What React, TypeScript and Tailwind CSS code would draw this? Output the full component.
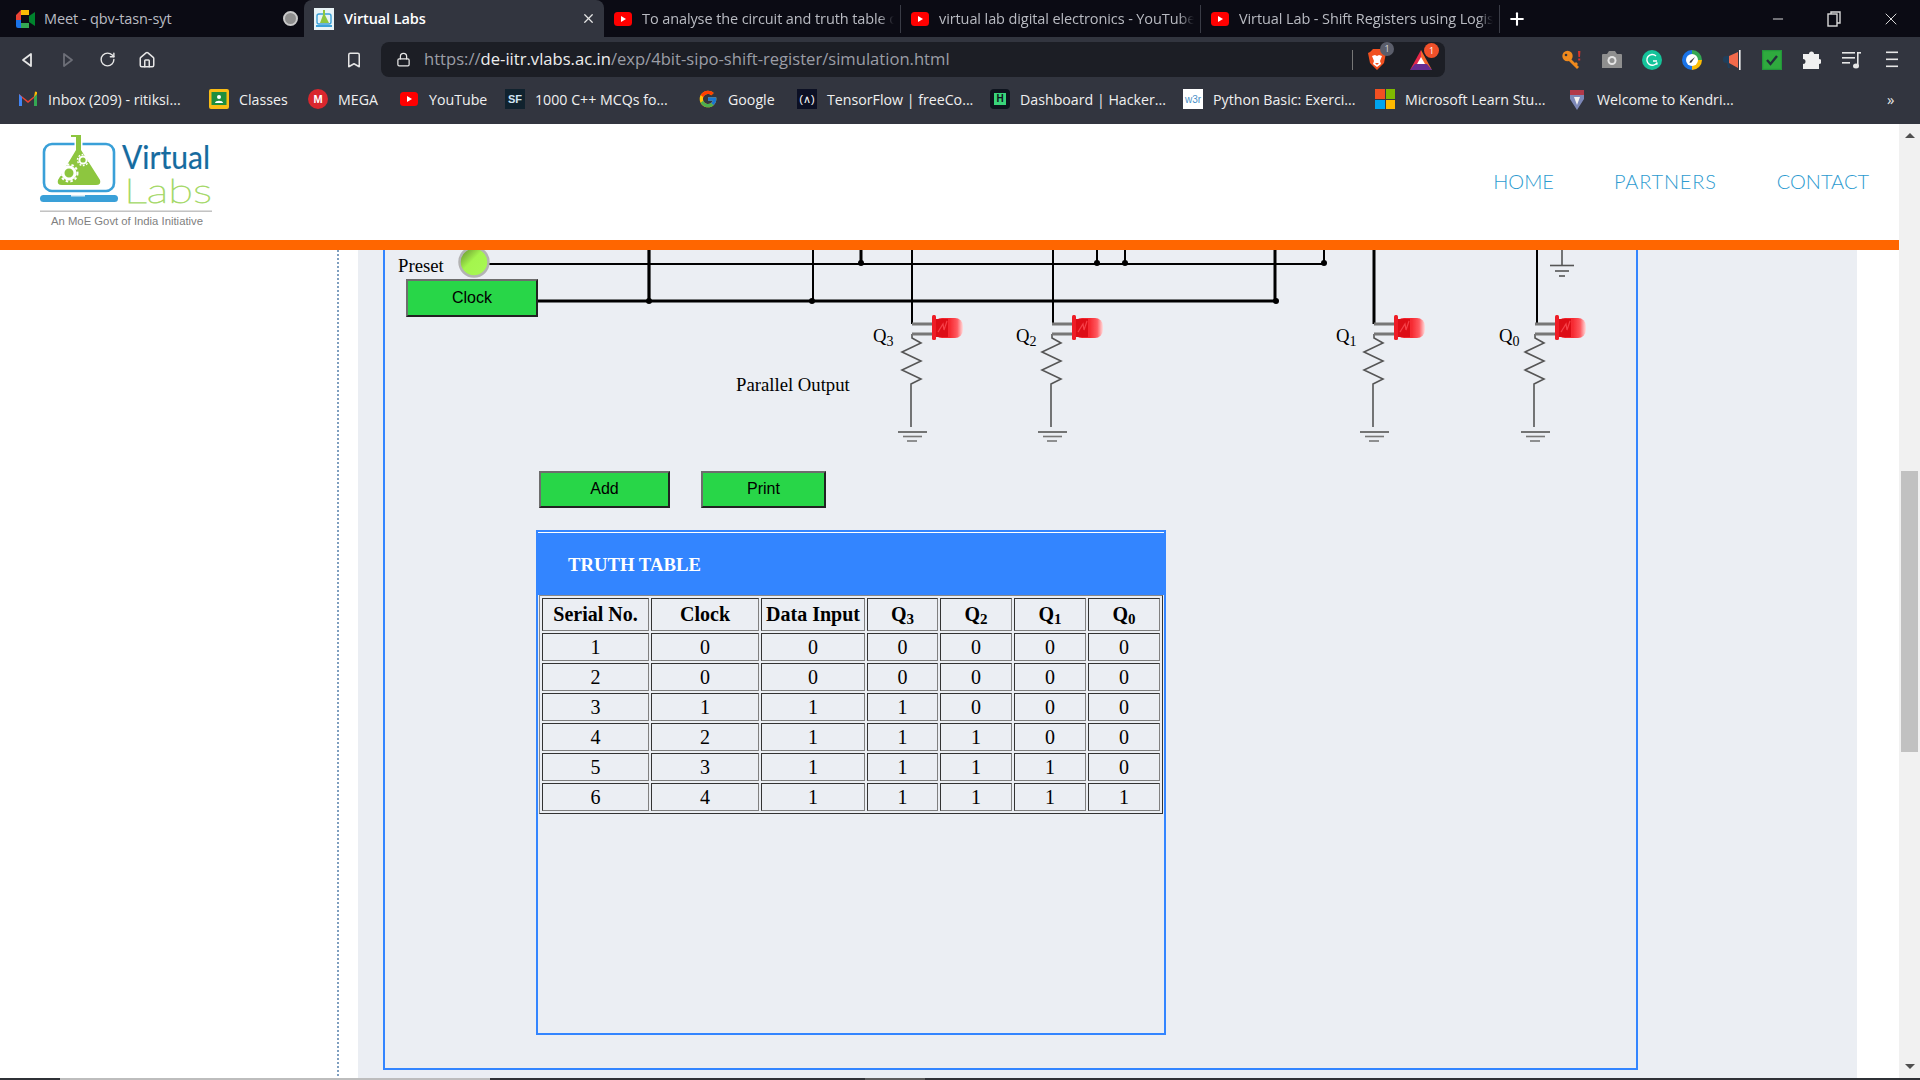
import { FcGoogle } from 'react-icons/fc';
import { Bookmark, Home, Lock, Minus, Plus, RotateCw, X } from 'lucide-react';
import type { ReactNode } from 'react';

const ui = "font-['Open_Sans',sans-serif]";

function YouTubeIcon() {
  return (
    <svg width="18" height="18" viewBox="0 0 18 18" className="shrink-0">
      <rect x="0" y="2" width="18" height="14" rx="3.5" fill="#f00" />
      <path d="M7 6l5 3-5 3z" fill="#fff" />
    </svg>
  );
}

function MeetIcon() {
  return (
    <svg width="20" height="18" viewBox="0 0 20 18" className="shrink-0">
      <path d="M1 5l5-5h8v5H6v5H1z" fill="#ea4335" />
      <path d="M1 10h5v8H3a2 2 0 0 1-2-2z" fill="#1a73e8" />
      <path d="M6 13h8v5H6z" fill="#34a853" />
      <path d="M6 5h8v8H6z" fill="#0b0b14" />
      <path d="M6 0h8v5H6z" fill="#fbbc04" />
      <path d="M14 6l6-4v14l-6-4z" fill="#00832d" />
    </svg>
  );
}

function VlabsFavicon() {
  return (
    <svg width="20" height="22" viewBox="0 0 20 22" className="shrink-0">
      <rect width="20" height="22" fill="#e8f3f6" />
      <rect x="3" y="6" width="14" height="10" rx="2" fill="none" stroke="#3aa0d8" strokeWidth="1.4" />
      <path d="M9 2h2v5l4 8H6l3-8z" fill="#8dc63f" />
      <rect x="2" y="17" width="16" height="2" fill="#3aa0d8" />
    </svg>
  );
}

function GmailIcon() {
  return (
    <svg width="20" height="16" viewBox="0 0 20 16">
      <path d="M1 15V3l9 7 9-7v12h-3V7l-6 5-6-5v8z" fill="#ea4335" />
      <path d="M1 15h3V6L1 3z" fill="#4285f4" />
      <path d="M19 15h-3V6l3-3z" fill="#34a853" />
      <path d="M16 6l3-3V1l-2-.5z" fill="#fbbc04" />
    </svg>
  );
}

function ClassroomIcon() {
  return (
    <svg width="20" height="20" viewBox="0 0 20 20">
      <rect width="20" height="20" rx="2" fill="#f9bc15" />
      <rect x="2.5" y="3" width="15" height="13" fill="#1e8e3e" />
      <circle cx="10" cy="8" r="2" fill="#fff" />
      <path d="M6 14c0-3 8-3 8 0z" fill="#fff" />
    </svg>
  );
}

function MegaIcon() {
  return (
    <div className="w-5 h-5 rounded-full bg-[#d9272e] text-white text-[11px] font-bold flex items-center justify-center font-['Liberation_Sans',sans-serif]">
      M
    </div>
  );
}

function SfIcon() {
  return (
    <div className="w-5 h-5 bg-[#10222e] text-[#cfe4f2] text-[11px] font-bold flex items-center justify-center font-['Liberation_Sans',sans-serif]">
      SF
    </div>
  );
}

function TfIcon() {
  return (
    <div className="w-5 h-5 bg-[#0c1024] text-white text-[11px] flex items-center justify-center font-['Liberation_Sans',sans-serif]">
      (∧)
    </div>
  );
}

function HackerIcon() {
  return (
    <div className="w-5 h-5 rounded-sm bg-[#0e141e] flex items-center justify-center">
      <div className="w-3 h-3 bg-[#39d47a] text-[#0e141e] text-[10px] font-bold leading-3 text-center font-['Liberation_Sans',sans-serif]">
        H
      </div>
    </div>
  );
}

function W3Icon() {
  return (
    <div className="w-5 h-5 bg-white text-[#4a90c8] text-[10px] flex items-center justify-center font-['Liberation_Sans',sans-serif]">
      w3r
    </div>
  );
}

function MicrosoftIcon() {
  return (
    <div className="w-5 h-5 grid grid-cols-2 gap-px">
      <div className="bg-[#f25022]" />
      <div className="bg-[#7fba00]" />
      <div className="bg-[#00a4ef]" />
      <div className="bg-[#ffb900]" />
    </div>
  );
}

function KendriyaIcon() {
  return (
    <svg width="20" height="22" viewBox="0 0 20 22">
      <path d="M3 1l7 2 7-2v9l-7 11-7-11z" fill="#7d88b8" />
      <path d="M3 1h14v5H3z" fill="#b23a4a" />
      <path d="M7 8h6l-3 8z" fill="#f2f2f2" />
    </svg>
  );
}

const tabs = [
  { title: 'To analyse the circuit and truth table o', w: 'w-[297px]' },
  { title: 'virtual lab digital electronics - YouTube', w: 'w-[300px]' },
  { title: 'Virtual Lab - Shift Registers using Logisim', w: 'w-[299px]' },
];

function TabStrip() {
  return (
    <div className={`h-[37px] bg-[#0b0b14] flex items-center ${ui} text-[14.5px] tracking-[-0.1px]`}>
      <div className="w-[304px] h-full flex items-center pl-[15px] pr-[6px] text-[#b9bbc2]">
        <MeetIcon />
        <span className="ml-[9px]">Meet - qbv-tasn-syt</span>
        <span className="ml-auto w-[15px] h-[15px] rounded-full border-2 border-[#c9c9c9] bg-[#8e8e8e]" />
      </div>
      <div className="w-[300px] h-full bg-[#32353f] rounded-t-lg flex items-center pl-[10px] pr-2 text-white font-semibold">
        <VlabsFavicon />
        <span className="ml-[10px]">Virtual Labs</span>
        <X size={15} strokeWidth={2} className="ml-auto text-[#e5e5e5]" />
      </div>
      {tabs.map((t) => (
        <div
          key={t.title}
          className={`${t.w} h-[28px] flex items-center pl-[10px] pr-[6px] text-[#b9bbc2] border-r border-[#3a3c46]`}
        >
          <YouTubeIcon />
          <span className="ml-[10px] flex-1 min-w-0 whitespace-nowrap overflow-hidden [mask-image:linear-gradient(to_right,black_94%,transparent)]">
            {t.title}
          </span>
        </div>
      ))}
      <Plus size={20} strokeWidth={2.5} className="ml-[7px] text-white" />
      <div className="ml-auto flex items-center text-[#d8d8d8]">
        <Minus size={16} strokeWidth={1.5} className="mr-[41px]" />
        <svg width="14" height="16" viewBox="0 0 14 16" fill="none" stroke="currentColor" strokeWidth="1.4" className="mr-[40px]">
          <rect x="1" y="3" width="9" height="12" />
          <path d="M4 3V1h9v11h-3" />
        </svg>
        <X size={20} strokeWidth={1.2} className="mr-[19px]" />
      </div>
    </div>
  );
}

function BackIcon({ flip, color }: { flip?: boolean; color: string }) {
  return (
    <svg width="14" height="16" viewBox="0 0 14 16" fill="none" stroke={color} strokeWidth="1.8" strokeLinejoin="round" className={flip ? 'rotate-180' : ''}>
      <path d="M11 2v12L3 8z" />
    </svg>
  );
}

function Toolbar() {
  return (
    <div className={`h-[46px] pb-[1px] bg-[#32353f] flex items-center ${ui}`}>
      <div className="w-[381px] flex items-center shrink-0 text-[#e6e6e6]">
        <div className="ml-[20px]"><BackIcon color="#e6e6e6" /></div>
        <div className="ml-[27px]"><BackIcon flip color="#6d6f78" /></div>
        <RotateCw size={17} strokeWidth={2} className="ml-[24px]" />
        <Home size={18} strokeWidth={2} className="ml-[22px]" />
        <Bookmark size={18} strokeWidth={2} className="ml-[189px]" />
      </div>
      <div className="w-[1064px] h-[35px] bg-[#1c1e25] rounded-lg flex items-center pl-[15px] relative">
        <Lock size={15} strokeWidth={2} className="text-[#e6e6e6]" />
        <span className="ml-[13px] text-[16.6px] text-[#9b9da5] whitespace-nowrap">
          https://<span className="text-[#eeeeee]">de-iitr.vlabs.ac.in</span>/exp/4bit-sipo-shift-register/simulation.html
        </span>
        <div className="ml-auto h-[20px] border-l border-[#777] mr-[15px]" />
        <div className="relative mr-[24px]">
          <svg width="18" height="21" viewBox="0 0 18 21">
            <path d="M2 3l3-3h8l3 3 2 1-2 10-7 7-7-7L0 4z" fill="#f1501f" />
            <path d="M4 7l3-1 2 1 2-1 3 1-2 5 1 3-4 3-4-3 1-3z" fill="#fff" />
            <path d="M7 14h4l-2 2z" fill="#f1501f" />
          </svg>
          <span className="absolute -top-[7px] -right-[8px] w-[14px] h-[14px] rounded-full bg-[#5b5e6b] text-[9px] leading-[14px] text-center text-[#ddd]">1</span>
        </div>
        <div className="relative mr-[13px]">
          <svg width="22" height="20" viewBox="0 0 22 20">
            <path d="M11 0L0 20l11-6z" fill="#e6274a" />
            <path d="M11 0l11 20-11-6z" fill="#f5672c" />
            <path d="M0 20l5-6h12l5 6z" fill="#662d91" />
            <path d="M11 7l4 7H7z" fill="#fff" />
          </svg>
          <span className="absolute -top-[7px] -right-[7px] w-[15px] h-[15px] rounded-full bg-[#f0502a] text-[9px] leading-[15px] text-center text-white">1</span>
        </div>
      </div>
      <div className="flex items-center ml-[107px]">
        <ExtKey />
        <ExtCamera />
        <ExtGrammarly />
        <ExtCompass />
        <ExtSpeaker />
        <ExtCheck />
        <ExtPuzzle />
        <ExtMusic />
        <ExtMenu />
      </div>
    </div>
  );
}

function Ext({ children }: { children: ReactNode }) {
  return <div className="w-[40px] flex items-center justify-center">{children}</div>;
}

function ExtKey() {
  return (
    <Ext>
      <svg width="20" height="19" viewBox="0 0 20 19">
        <circle cx="5.5" cy="6" r="5.2" fill="#f08a1d" />
        <circle cx="4" cy="5" r="1.3" fill="#32353f" />
        <path d="M8 8l-2 2 7 7 2 2 2-2-2-2 1-1-2-2-1 1z" fill="#f08a1d" />
        <path d="M16 1h2.4l-.4 6h-1.6zM16.2 8.5h2v2h-2z" fill="#d9342b" />
      </svg>
    </Ext>
  );
}

function ExtCamera() {
  return (
    <Ext>
      <svg width="20" height="17" viewBox="0 0 20 17">
        <path d="M0 4q0-1 1-1h4l2-3h6l2 3h4q1 0 1 1v13H0z" fill="#8f8f8f" />
        <circle cx="10" cy="9.5" r="4.5" fill="#e4e4e4" />
        <circle cx="10" cy="9.5" r="2.5" fill="#8f8f8f" />
      </svg>
    </Ext>
  );
}

function ExtGrammarly() {
  return (
    <Ext>
      <svg width="20" height="20" viewBox="0 0 20 20">
        <circle cx="10" cy="10" r="10" fill="#15c39a" />
        <path d="M14 6a5.4 5.4 0 1 0 1 6.5l-.2 2.3M15 11h-4" fill="none" stroke="#fff" strokeWidth="1.4" />
      </svg>
    </Ext>
  );
}

function ExtCompass() {
  return (
    <Ext>
      <svg width="20" height="20" viewBox="0 0 20 20">
        <path d="M10 0a10 10 0 0 1 10 10h-5a5 5 0 0 0-5-5z" fill="#34a853" />
        <path d="M20 10a10 10 0 0 1-10 10v-5a5 5 0 0 0 5-5z" fill="#fbbc04" />
        <path d="M10 20A10 10 0 0 1 0 10a10 10 0 0 1 10-10v5a5 5 0 0 0 0 10z" fill="#1a73e8" />
        <circle cx="10" cy="10" r="6" fill="#fff" />
        <path d="M13 7l-3.5 5.5-2 .5.5-2z" fill="#444" />
      </svg>
    </Ext>
  );
}

function ExtSpeaker() {
  return (
    <Ext>
      <svg width="19" height="20" viewBox="0 0 19 20">
        <path d="M6 6H3a3 3 0 0 0-3 3v1a3 3 0 0 0 3 3h1l1 5h2l-1-5z" fill="#1f3f5c" />
        <path d="M6 6l9-4v16l-9-5z" fill="#f26a4b" />
        <rect x="16" y="0" width="1.6" height="20" fill="#f0f0f0" />
      </svg>
    </Ext>
  );
}

function ExtCheck() {
  return (
    <Ext>
      <svg width="20" height="20" viewBox="0 0 20 20">
        <rect width="20" height="20" fill="#23963a" />
        <rect x="1.2" y="1.2" width="17.6" height="17.6" fill="#2faa3e" />
        <path d="M5 10l3.5 4L15 6" fill="none" stroke="#22303a" strokeWidth="2.4" />
      </svg>
    </Ext>
  );
}

function ExtPuzzle() {
  return (
    <Ext>
      <svg width="18" height="18" viewBox="0 0 18 18">
        <path d="M6 3a2.5 2.5 0 0 1 5 0h5v5a2.5 2.5 0 0 1 0 5v5H0v-5a2.5 2.5 0 0 0 0-5V3z" fill="#f0f0f0" />
      </svg>
    </Ext>
  );
}

function ExtMusic() {
  return (
    <Ext>
      <svg width="20" height="18" viewBox="0 0 20 18" fill="#e6e6e6">
        <rect x="0" y="1" width="13" height="1.6" />
        <rect x="0" y="6" width="13" height="1.6" />
        <rect x="0" y="11" width="8" height="1.6" />
        <rect x="15" y="1" width="1.6" height="14" />
        <rect x="15" y="1" width="4" height="1.6" />
        <ellipse cx="14" cy="15" rx="3" ry="2.5" />
      </svg>
    </Ext>
  );
}

function ExtMenu() {
  return (
    <Ext>
      <svg width="12" height="17" viewBox="0 0 12 17" fill="#e6e6e6">
        <rect x="0" y="0.5" width="12" height="1.6" />
        <rect x="0" y="7.5" width="12" height="1.6" />
        <rect x="0" y="14.5" width="12" height="1.6" />
      </svg>
    </Ext>
  );
}

const bookmarks: { icon: ReactNode; label: string; w: string }[] = [
  { icon: <GmailIcon />, label: 'Inbox (209) - ritiksi...', w: 'w-[191px]' },
  { icon: <ClassroomIcon />, label: 'Classes', w: 'w-[99px]' },
  { icon: <MegaIcon />, label: 'MEGA', w: 'w-[91px]' },
  { icon: <YouTubeIcon />, label: 'YouTube', w: 'w-[106px]' },
  { icon: <SfIcon />, label: '1000 C++ MCQs fo...', w: 'w-[193px]' },
  { icon: <FcGoogle size={20} />, label: 'Google', w: 'w-[99px]' },
  { icon: <TfIcon />, label: 'TensorFlow | freeCo...', w: 'w-[193px]' },
  { icon: <HackerIcon />, label: 'Dashboard | Hacker...', w: 'w-[193px]' },
  { icon: <W3Icon />, label: 'Python Basic: Exerci...', w: 'w-[192px]' },
  { icon: <MicrosoftIcon />, label: 'Microsoft Learn Stu...', w: 'w-[192px]' },
  { icon: <KendriyaIcon />, label: 'Welcome to Kendri...', w: 'w-[320px]' },
];

function BookmarkBar() {
  return (
    <div className={`h-[41px] pb-[8px] bg-[#32353f] flex items-center pl-[18px] ${ui} text-[14.2px] text-[#f0f0f0]`}>
      {bookmarks.map((b) => (
        <div key={b.label} className={`${b.w} flex items-center gap-[10px] shrink-0 whitespace-nowrap`}>
          <div className="w-5 flex justify-center shrink-0">{b.icon}</div>
          <span>{b.label}</span>
        </div>
      ))}
      <span className="text-[15px] text-[#e6e6e6]">»</span>
    </div>
  );
}

function Logo() {
  return (
    <svg width="180" height="100" viewBox="36 132 180 100" className="ml-[36px] mt-[8px] overflow-visible">
      <rect x="44" y="144" width="70" height="47" rx="8" fill="none" stroke="#3aa0d8" strokeWidth="2.6" />
      <rect x="40" y="195" width="78" height="7" rx="3.5" fill="#3aa0d8" />
      <rect x="71" y="195" width="14" height="1.5" fill="#d7ecf8" />
      <path
        d="M71 135h10v15l19 30q1.5 5-4 5H62q-5.500 0-4-5l18-30v-13h-5z"
        fill="#8dc63f"
        stroke="#fff"
        strokeWidth="3"
        paintOrder="stroke"
      />
      <circle cx="69" cy="173" r="6" fill="none" stroke="#fff" strokeWidth="3" />
      <circle cx="69" cy="173" r="8.5" fill="none" stroke="#fff" strokeWidth="2" strokeDasharray="2.5 2.2" />
      <circle cx="83" cy="160" r="3.6" fill="none" stroke="#fff" strokeWidth="2" />
      <circle cx="83" cy="160" r="5.5" fill="none" stroke="#fff" strokeWidth="1.4" strokeDasharray="1.8 1.6" />
      <text x="122" y="169" fontFamily="Lato, sans-serif" fontSize="33" fill="#166b9f" stroke="#166b9f" strokeWidth="0.2" textLength="88" lengthAdjust="spacingAndGlyphs">Virtual</text>
      <text x="124" y="203" fontFamily="Lato, sans-serif" fontWeight="100" fontSize="34" fill="#a6d96a" stroke="#a6d96a" strokeWidth="0.8" textLength="88" lengthAdjust="spacingAndGlyphs">Labs</text>
      <rect x="40" y="210.500" width="172" height="1.4" fill="#bdbdbd" />
      <text x="51" y="225" fontFamily="'Liberation Sans', sans-serif" fontSize="10" fill="#808080" textLength="152" lengthAdjust="spacingAndGlyphs">An MoE Govt of India Initiative</text>
    </svg>
  );
}

function SiteHeader() {
  return (
    <div className="shrink-0">
      <div className="h-[116px] bg-white flex items-start">
        <Logo />
        <nav className="ml-auto mr-[30px] mt-[42px] flex gap-[60px] font-['Lato',sans-serif] font-light text-[20px] text-[#2d9bd0]">
          <a>HOME</a>
          <a className="tracking-[0.8px]">PARTNERS</a>
          <a>CONTACT</a>
        </nav>
      </div>
      <div className="h-[10px] bg-[#ff6600]" />
    </div>
  );
}

function Resistor({ x }: { x: number }) {
  // zigzag from the lower LED lead down to the ground bars
  const d = `M${x} 334v4l9 5-19 9 19 9-19 9 19 9-10 5v43`;
  return (
    <g fill="none" stroke="#555" strokeWidth="1.6">
      <path d={d} />
      <path d={`M${x - 14} 432h29`} strokeWidth="1.8" stroke="#666" />
      <path d={`M${x - 9} 436.5h19`} strokeWidth="1.6" stroke="#777" />
      <path d={`M${x - 5} 441h10`} strokeWidth="1.6" stroke="#777" />
    </g>
  );
}

function Led({ x }: { x: number }) {
  return (
    <g>
      <path d={`M${x} 324h20M${x} 334h20`} stroke="#777" strokeWidth="3" fill="none" />
      <g filter="url(#ledSoft)">
        <rect x={x + 22} y="318" width="29" height="20" rx="8" fill="url(#ledBody)" />
        <rect x={x + 20} y="315" width="4" height="25" rx="1.5" fill="#ee1c25" />
        <path d={`M${x + 24} 319h12v18H${x + 24}z`} fill="#dd0f18" />
        <path d={`M${x + 26} 332l5-8 1 6 3-9`} stroke="#f64048" strokeWidth="1.2" fill="none" />
      </g>
    </g>
  );
}

function Wire({ d, w = 2 }: { d: string; w?: number }) {
  return <path d={d} fill="none" stroke="#000" strokeWidth={w} />;
}

function CircuitDiagram() {
  return (
    <div className="relative h-[221px] font-['Liberation_Serif',serif] text-black text-[18.72px] overflow-hidden">
      <svg className="absolute inset-0" width="1250" height="221" viewBox="385 250 1250 221">
        <defs>
          <linearGradient id="ledBody" x1="0" x2="1" y1="0" y2="0">
            <stop offset="0" stopColor="#ee1c25" />
            <stop offset="0.55" stopColor="#f62a32" />
            <stop offset="0.8" stopColor="#ff5a60" />
            <stop offset="1" stopColor="#ffdfe0" />
          </linearGradient>
          <linearGradient id="presetBall" x1="0" x2="1" y1="0" y2="1">
            <stop offset="0" stopColor="#5d7f2a" />
            <stop offset="0.45" stopColor="#a4f54d" />
            <stop offset="1" stopColor="#a8f855" />
          </linearGradient>
          <filter id="ledSoft" x="-10%" y="-10%" width="120%" height="120%">
            <feGaussianBlur stdDeviation="0.5" />
          </filter>
        </defs>

        <Wire d="M488 264H1324" />
        <Wire d="M538 301H1276" w={3} />
        <Wire d="M649 250V301" w={3.2} />
        <Wire d="M813 250V301" />
        <Wire d="M861 250V264" w={3} />
        <Wire d="M912 250V324" />
        <Wire d="M1053 250V324" />
        <Wire d="M1097 250V264" w={2} />
        <Wire d="M1125 250V264" w={2} />
        <Wire d="M1324 250V264" />
        <Wire d="M1275 250V301" w={3} />
        <Wire d="M1374 250V324" w={3} />
        <Wire d="M1537 250V324" />
        {[
          [649, 301],
          [812, 301],
          [861, 263],
          [1097, 263],
          [1125, 263],
          [1324, 263],
          [1276, 301],
        ].map(([cx, cy]) => (
          <circle key={`${cx}-${cy}`} cx={cx} cy={cy} r="3" fill="#000" />
        ))}

        <g fill="none" stroke="#555" strokeWidth="1.6">
          <path d="M1562 250v15" />
          <path d="M1550 265.5h24" />
          <path d="M1555 271h14" />
          <path d="M1559 276h6" />
        </g>

        {[912, 1052, 1374, 1535].map((x) => (
          <g key={x}>
            <Resistor x={x} />
            <Led x={x} />
          </g>
        ))}

        <circle cx="474" cy="262" r="14.5" fill="url(#presetBall)" stroke="#b3b3b3" strokeWidth="2.5" />
      </svg>

      <span className="absolute left-[13px] top-[2px]">Preset</span>
      <button className="absolute left-[21px] top-[29px] w-[132px] h-[38px] bg-[#28d648] border-2 border-t-[#6d6d6d] border-l-[#6d6d6d] border-r-[#222] border-b-[#222] font-['Liberation_Sans',sans-serif] text-[16px]">
        Clock
      </button>
      <span className="absolute left-[488px] top-[72px]">Q<sub>3</sub></span>
      <span className="absolute left-[631px] top-[72px]">Q<sub>2</sub></span>
      <span className="absolute left-[951px] top-[72px]">Q<sub>1</sub></span>
      <span className="absolute left-[1114px] top-[72px]">Q<sub>0</sub></span>
      <span className="absolute left-[351px] top-[121px]">Parallel Output</span>
    </div>
  );
}

function SimButton({ label, w }: { label: string; w: string }) {
  return (
    <button className={`${w} h-[37px] pb-[2px] bg-[#28d648] border-2 border-t-[#6d6d6d] border-l-[#6d6d6d] border-r-[#222] border-b-[#222] font-['Liberation_Sans',sans-serif] text-[16px] text-black`}>
      {label}
    </button>
  );
}

const rows = [
  [1, 0, 0, 0, 0, 0, 0],
  [2, 0, 0, 0, 0, 0, 0],
  [3, 1, 1, 1, 0, 0, 0],
  [4, 2, 1, 1, 1, 0, 0],
  [5, 3, 1, 1, 1, 1, 0],
  [6, 4, 1, 1, 1, 1, 1],
];

const cellEdge = 'border border-t-[#333] border-l-[#333] border-r-[#808080] border-b-[#808080] p-0 text-center';
const headCell = `${cellEdge} pb-[2px] leading-[26px]`;

function TruthTable() {
  return (
    <div className="ml-[151px] mt-[22px] w-[630px] h-[505px] border-2 border-[#3385ff] font-['Liberation_Serif',serif] text-black">
      <div className="h-[63px] bg-[#3385ff] border-t border-white pl-[30px] flex items-center">
        <h3 className="text-[18.72px] font-bold text-white mt-[2px]">TRUTH TABLE</h3>
      </div>
      <table className="ml-px table-fixed w-[624px] border-separate border-spacing-[2px] border border-t-[#888] border-l-[#888] border-r-[#333] border-b-[#333] text-[20px]">
        <colgroup>
          <col className="w-[107px]" />
          <col className="w-[108px]" />
          <col className="w-[104px]" />
          <col className="w-[71px]" />
          <col className="w-[72px]" />
          <col className="w-[72px]" />
          <col className="w-[72px]" />
        </colgroup>
        <thead>
          <tr className="h-[33px]">
            <th className={headCell}>Serial No.</th>
            <th className={headCell}>Clock</th>
            <th className={headCell}>Data Input</th>
            <th className={headCell}>Q<sub>3</sub></th>
            <th className={headCell}>Q<sub>2</sub></th>
            <th className={headCell}>Q<sub>1</sub></th>
            <th className={headCell}>Q<sub>0</sub></th>
          </tr>
        </thead>
        <tbody>
          {rows.map((r) => (
            <tr key={r[0]} className="h-[28px]">
              {r.map((v, i) => (
                <td key={i} className={`${cellEdge} leading-none`}>{v}</td>
              ))}
            </tr>
          ))}
        </tbody>
      </table>
    </div>
  );
}

function PageBody() {
  return (
    <div className="flex-1 min-h-0 flex bg-white">
      <div className="w-[339px] border-r-2 border-dotted border-[#7f9fc0] shrink-0 mb-[2px]" />
      <div className="w-[19px] shrink-0" />
      <div className="w-[1499px] bg-[#ebeef3] pl-[25px] shrink-0">
        <div className="w-[1255px] h-[820px] border-x-2 border-b-2 border-[#3385ff]">
          <CircuitDiagram />
          <div className="ml-[154px] flex gap-[31px]">
            <SimButton label="Add" w="w-[131px]" />
            <SimButton label="Print" w="w-[125px]" />
          </div>
          <TruthTable />
        </div>
      </div>
    </div>
  );
}

function Scrollbar() {
  return (
    <div className="w-[21px] bg-[#f1f1f1] flex flex-col items-center relative shrink-0">
      <div className="mt-[9px] w-0 h-0 border-x-[5px] border-x-transparent border-b-[5px] border-b-[#505050]" />
      <div className="absolute top-[347px] w-[17px] h-[281px] bg-[#c1c1c1]" />
      <div className="mt-auto mb-[9px] w-0 h-0 border-x-[5px] border-x-transparent border-t-[5px] border-t-[#505050]" />
    </div>
  );
}

function TaskbarEdge() {
  return (
    <div className="h-[2px] bg-[#2f3136] flex shrink-0">
      <div className="ml-[60px] w-[430px] bg-[#bdbdbd]" />
      <div className="ml-[375px] w-[60px] bg-[#5c5c5c]" />
    </div>
  );
}

export default function App() {
  return (
    <div className="h-screen w-full overflow-hidden flex flex-col bg-white">
      <TabStrip />
      <Toolbar />
      <BookmarkBar />
      <div className="flex-1 min-h-0 flex">
        <div className="flex-1 min-w-0 flex flex-col">
          <SiteHeader />
          <PageBody />
        </div>
        <Scrollbar />
      </div>
      <TaskbarEdge />
    </div>
  );
}
